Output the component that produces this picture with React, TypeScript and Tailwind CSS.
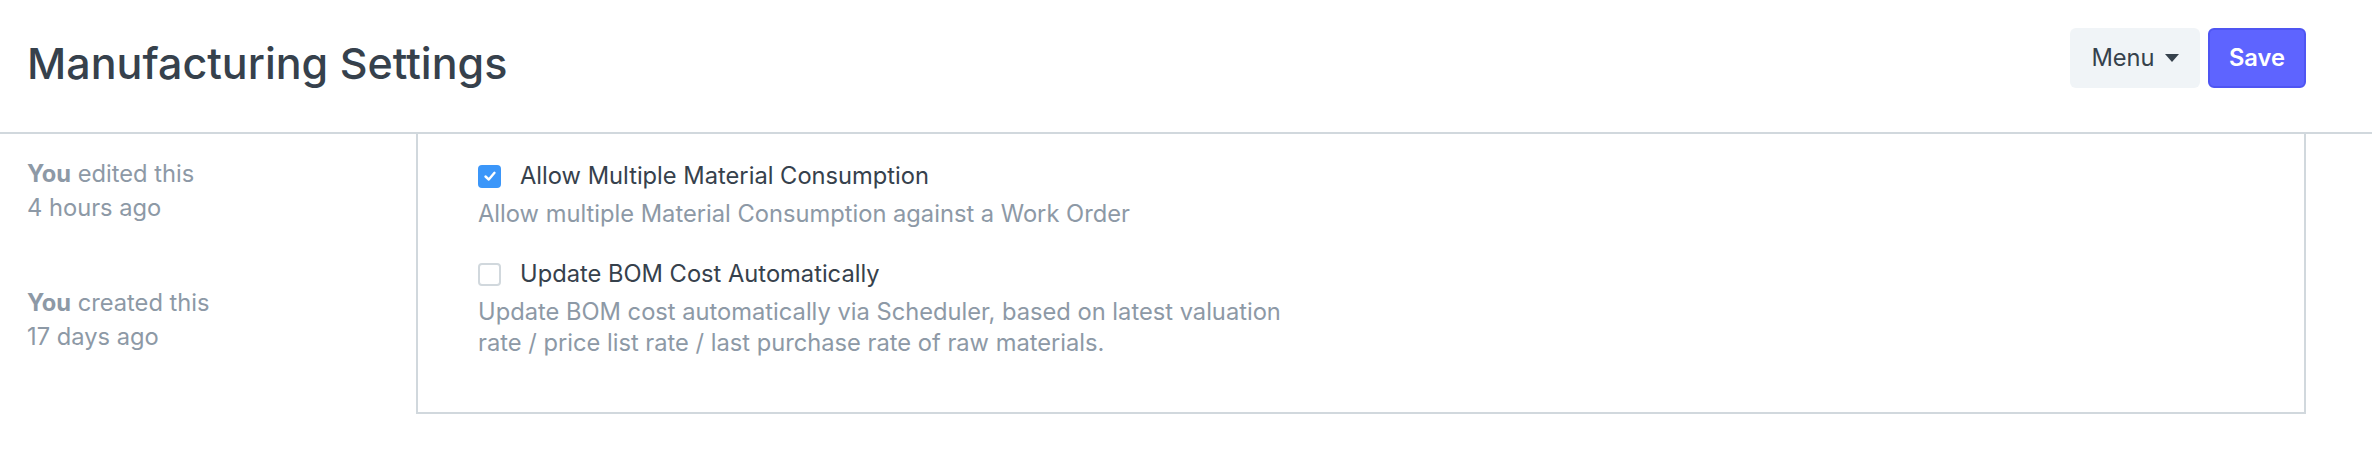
import React from 'react';

const font = { fontFamily: 'Inter, "Liberation Sans", sans-serif' };

const Checkbox: React.FC<{ checked?: boolean }> = ({ checked }) =>
  checked ? (
    <span className="flex h-[23px] w-[23px] shrink-0 items-center justify-center rounded-[4px] bg-[#3b96f9]">
      <svg width="14" height="14" viewBox="0 0 14 14" fill="none">
        <polyline points="2.5,7.5 5.8,10.5 11.5,3.8" stroke="white" strokeWidth="2.4" strokeLinecap="round" strokeLinejoin="round" />
      </svg>
    </span>
  ) : (
    <span className="h-[23px] w-[23px] shrink-0 rounded-[4px] border-2 border-[#d1d8dd] bg-white" />
  );

const SettingRow: React.FC<{ label: string; help: string; checked?: boolean }> = ({ label, help, checked }) => (
  <div>
    <label className="flex items-center gap-[19px]">
      <Checkbox checked={checked} />
      <span className="text-[23.7px] leading-[34px] text-[#36414c]">{label}</span>
    </label>
    <p className="mt-[5px] w-[830px] text-[23.7px] leading-[31px] text-[#8d99a6]">{help}</p>
  </div>
);

export default function App() {
  return (
    <div className="min-h-screen bg-white" style={font}>
      <div className="flex h-[134px] items-start justify-between border-b-2 border-[#d1d8dd] pl-[27px] pr-[66px]">
        <h1 className="mt-[37px] text-[43px] leading-[52px] font-medium text-[#36414c]">Manufacturing Settings</h1>
        <div className="mt-[28px] flex gap-[8px]">
          <button className="flex h-[60px] w-[130px] items-center justify-center gap-[10px] rounded-[6px] bg-[#f0f4f7] text-[23.7px] text-[#36414c]">
            Menu
            <svg width="14" height="8" viewBox="0 0 14 8">
              <polygon points="0,0 14,0 7,8" fill="#36414c" />
            </svg>
          </button>
          <button className="flex h-[60px] w-[98px] items-center justify-center rounded-[6px] border-2 border-[#4f55f2] bg-[#5e64ff] text-[23.7px] font-semibold text-white">
            Save
          </button>
        </div>
      </div>

      <div className="flex pl-[27px] pr-[66px]">
        <aside className="w-[389px] shrink-0 pt-[23px] text-[23.7px] leading-[34px] text-[#8d99a6]">
          <div>
            <div><span className="font-bold">You</span> edited this</div>
            <div>4 hours ago</div>
          </div>
          <div className="mt-[61px]">
            <div><span className="font-bold">You</span> created this</div>
            <div>17 days ago</div>
          </div>
        </aside>

        <main className="flex h-[280px] flex-1 flex-col gap-[28px] border-x-2 border-b-2 border-[#d1d8dd] pt-[25px] pl-[60px]">
          <SettingRow
            checked
            label="Allow Multiple Material Consumption"
            help="Allow multiple Material Consumption against a Work Order"
          />
          <SettingRow
            label="Update BOM Cost Automatically"
            help="Update BOM cost automatically via Scheduler, based on latest valuation rate / price list rate / last purchase rate of raw materials."
          />
        </main>
      </div>
    </div>
  );
}
